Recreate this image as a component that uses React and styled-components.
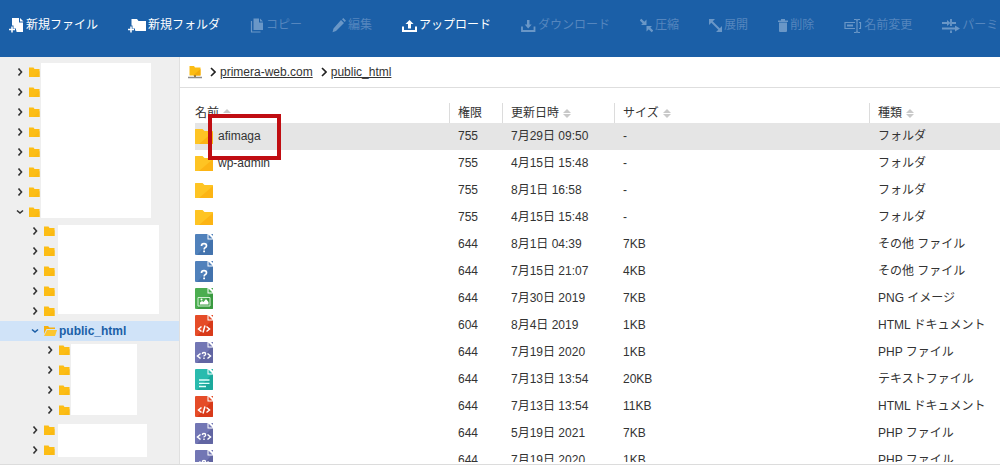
import React from "react";
import styled, { createGlobalStyle } from "styled-components";

const Global = createGlobalStyle`
  * { box-sizing: border-box; }
  body {
    margin: 0;
    background: #fff;
    color: #333;
    font: 12px/20px "Liberation Sans", "Noto Sans CJK JP", sans-serif;
  }
  button { font: inherit; color: inherit; background: none; border: 0; padding: 0; }
  svg { display: block; flex: none; }
`;

const Shell = styled.div`
  display: flex;
  flex-direction: column;
  height: 100vh;
  overflow: hidden;
`;

const Toolbar = styled.header`
  flex: none;
  display: flex;
  align-items: flex-start;
  gap: 30px;
  padding: 15px 0 22px 9px;
  background: #1b5fa7;
  overflow: hidden;
`;

const ToolButton = styled.button`
  flex: none;
  display: flex;
  align-items: center;
  gap: 2px;
  color: #fff;
  white-space: nowrap;
  cursor: pointer;
  &:disabled { color: #5586be; cursor: default; }
  &:disabled svg { color: #6a97c7; }
`;

const Body = styled.div`
  flex: 1;
  min-height: 0;
  display: flex;
  margin-bottom: 8px;
  border-bottom: 1px solid #dcdcdc;
`;

const Sidebar = styled.nav`
  flex: none;
  width: 180px;
  overflow: hidden;
  background: #efefef;
  border-right: 1px solid #e0e0e0;
`;

const Tree = styled.ul`
  position: relative;
  list-style: none;
  padding: 0;
  margin: ${(p) => (p.$root ? "-15px" : "-1px")} 0 0;
`;

const TreeRow = styled.div`
  display: flex;
  align-items: center;
  height: 20px;
  padding-left: ${(p) => 15 + p.$depth * 15}px;
  background: ${(p) => (p.$active ? "#d0e3f8" : "transparent")};
  color: ${(p) => (p.$active ? "#1b5fa7" : "#333")};
  font-weight: bold;
`;

const Toggle = styled.button`
  display: flex;
  justify-content: center;
  width: 10px;
  margin-right: 4px;
  cursor: pointer;
`;

const TreeIcon = styled.span`
  width: 15px;
  flex: none;
`;

const Mask = styled.div`
  position: absolute;
  background: #fff;
  left: ${(p) => p.$left}px;
  top: ${(p) => p.$top}px;
  width: ${(p) => p.$width}px;
  height: ${(p) => p.$height}px;
`;

const Main = styled.main`
  flex: 1;
  min-width: 0;
  display: flex;
  flex-direction: column;
`;

const Breadcrumb = styled.nav`
  flex: none;
  display: flex;
  align-items: center;
  gap: 8px;
  height: 31px;
  padding-left: 8px;
  border-bottom: 1px solid #dedede;
`;

const Crumb = styled.span`
  display: flex;
  align-items: center;
  gap: 4px;
`;

const CrumbLink = styled.a`
  color: #333;
  text-decoration: underline;
`;

const Listing = styled.section`
  flex: 1;
  min-height: 0;
  overflow: hidden;
  padding-left: 15px;
  padding-top: 15px;
  margin-bottom: 2px;
`;

const Files = styled.table`
  width: 100%;
  table-layout: fixed;
  border-collapse: separate;
  border-spacing: 0;
`;

const Col = styled.col`
  width: ${(p) => (p.$width ? `${p.$width}px` : "auto")};
`;

const Head = styled.th`
  height: 20px;
  padding: 0 0 0 8px;
  text-align: left;
  font-weight: normal;
  border-left: 1px solid #dcdcdc;
  &:first-child { padding-left: 0; border-left: 0; }
`;

const SortButton = styled.button`
  display: flex;
  align-items: center;
  gap: 4px;
  height: 20px;
  color: #333;
  cursor: pointer;
`;

const FileRow = styled.tr`
  background: ${(p) => (p.$active ? "#e5e5e5" : "transparent")};
`;

const Cell = styled.td`
  position: relative;
  height: 27px;
  padding: 0 0 1px 9px;
  white-space: nowrap;
  &:first-child { padding-left: 0; }
`;

const Name = styled.div`
  display: flex;
  align-items: center;
  gap: 5px;
`;

const Highlight = styled.div`
  position: absolute;
  z-index: 1;
  left: 13px;
  top: -9px;
  width: 73px;
  height: 46px;
  border: 4px solid #c00d12;
`;

const PlusMark = () => <path d="M3 9.500v6M0 12.500h6" stroke="currentColor" strokeWidth="1.500" />;

const toolIcons = {
  newFile: [15, <>
    <path d="M3 1h7v4.500h4V15H7.500v-1.500H7v-2H4.500V8.500H3z" fill="currentColor" />
    <path d="M11 1l3.500 3.500H11z" fill="currentColor" /><PlusMark /></>],
  newFolder: [18, <>
    <path d="M3.500 2H9l1.500 2H18v10H7.500v-.5H7v-2H4.500V8.500h-1z" fill="currentColor" />
    <PlusMark /></>],
  copy: [14, <>
    <path d="M3.500 1.500h5.500v4h4v7.500H3.500z" fill="currentColor" /><path d="M10 1.500l3 3h-3z" fill="currentColor" />
    <path d="M1.500 4v11H10.500" fill="none" stroke="currentColor" strokeWidth="1.200" /></>],
  edit: [14, <>
    <path d="M9 3l3 3-8 8-3.500 1.200L1.500 11.500zM10 2.200l1.300-1.200 2.700 2.700-1.300 1.300z" fill="currentColor" /></>],
  upload: [15, <>
    <path d="M1 9.500v4.500h13V9.500" fill="none" stroke="currentColor" strokeWidth="2" />
    <path d="M7.500 3l4 4H9v4.500H6V7H3.500z" fill="currentColor" /></>],
  download: [15, <>
    <path d="M1 9.500v4.500h12.500V9.500" fill="none" stroke="currentColor" strokeWidth="1.800" />
    <path d="M7.200 11.500l3.500-4H8.500V3H6v4.500H3.700z" fill="currentColor" /></>],
  compress: [13, <>
    <path d="M.5 2.500l4 4M8.500 10.500l4 4" stroke="currentColor" strokeWidth="2.400" />
    <path d="M6.500 2.500v5.500H1zM6.500 9H12l-5.500 5.500z" fill="currentColor" /></>],
  expand: [13, <>
    <path d="M2 4l9 9" stroke="currentColor" strokeWidth="2" />
    <path d="M0 2h6L0 8zM13 15V9l-6 6z" fill="currentColor" /></>],
  trash: [10, <>
    <path d="M0 3.500h3V2h4v1.500h3V5H0zM1 5.500h8V14q0 1-1 1H2q-1 0-1-1z" fill="currentColor" /></>],
  rename: [18, <>
    <path d="M11 5.500H1v6h10M15 5.500h1.500v6H15M10 2.500h2l1 1 1-1h2M13 3.500v11M10 15.500h2l1-1 1 1h2" fill="none" stroke="currentColor" strokeWidth="1.200" />
    <path d="M3 7.500h6v2H3z" fill="currentColor" /></>],
  permission: [18, <>
    <path d="M0 6h6M10 6h4M0 11.500h15M9 2v7M9 13.500V16" stroke="currentColor" strokeWidth="1.800" />
    <path d="M5 3l3.500 3L5 9zM13 8.500l5 3-5 3z" fill="currentColor" /></>],
};

function ToolIcon({ name }) {
  const [width, art] = toolIcons[name];
  return <svg width={width} height="16" viewBox={`0 0 ${width} 16`} aria-hidden="true">{art}</svg>;
}

const tools = [
  ["newFile", "新規ファイル", true],
  ["newFolder", "新規フォルダ", true],
  ["copy", "コピー"],
  ["edit", "編集"],
  ["upload", "アップロード", true],
  ["download", "ダウンロード"],
  ["compress", "圧縮"],
  ["expand", "展開"],
  ["trash", "削除"],
  ["rename", "名前変更"],
  ["permission", "パーミッション"],
];

function Chevron({ open }) {
  return open ? (
    <svg width="8" height="6" viewBox="0 0 8 6"><path d="M1 1.500l3 2.500 3-2.500" fill="none" stroke="currentColor" strokeWidth="1.600" /></svg>
  ) : (
    <svg width="6" height="8" viewBox="0 0 6 8"><path d="M1.500 .5L4.500 4 1.500 7.500" fill="none" stroke="currentColor" strokeWidth="1.600" /></svg>
  );
}

const SmallFolder = () => (
  <svg width="11" height="10" viewBox="0 0 11 10">
    <path d="M0 .5h4.500l1 1.500H10.500v8H0z" fill="#fcbd15" />
    <path d="M10.500 4v6H4z" fill="#fab912" />
  </svg>
);

const OpenFolder = () => (
  <svg width="13" height="10" viewBox="0 0 13 10">
    <path d="M0 0h4l1.500 1.500H11V3H2.500L0 8z" fill="#f5b011" />
    <path d="M3 4h10l-2 6H0z" fill="#fcc62f" />
  </svg>
);

function Node({ depth, open, active, label, children }) {
  return (
    <li>
      <TreeRow $depth={depth} $active={active}>
        <Toggle aria-label="フォルダを開閉" aria-expanded={!!open}><Chevron open={open} /></Toggle>
        <TreeIcon>{active ? <OpenFolder /> : <SmallFolder />}</TreeIcon>
        {label}
      </TreeRow>
      {children}
    </li>
  );
}

const closed = (count, depth) => Array.from({ length: count }, (_, i) => <Node key={i} depth={depth} />);

const Folder = () => (
  <svg width="18" height="16" viewBox="0 0 18 16">
    <path d="M0 1.500Q0 1 .5 1H7.500l2 2h8q.5 0 .5.5V16H.5Q0 16 0 15.500z" fill="#fec423" />
    <path d="M18 4v12H4z" fill="#fcb414" />
  </svg>
);

const fileArt = {
  unknown: ["#5081bb", "#4373ad", <>
    <path d="M6.500 12q0-2.300 2.500-2.300t2.500 2q0 1.200-1.200 1.900t-1.200 1.900" fill="none" stroke="#fff" strokeWidth="1.700" />
    <path d="M8.200 16.500h1.800v1.700H8.200z" fill="#fff" /></>],
  image: ["#4bad50", "#3a9a40", <>
    <path d="M3 9.500h12v8.500H3z" fill="none" stroke="#d5f0d6" />
    <path d="M5 16.500v-2l2-1.500 1.500 1L11 11l2.500 3v2.500z" fill="#fff" /><circle cx="6.500" cy="11.500" r="1" fill="#fff" /></>],
  html: ["#e54c28", "#d83a1a", <path d="M6.500 11.500l-3 2.500 3 2.500M11.500 11.500l3 2.500-3 2.500M10 10.500l-2 7" fill="none" stroke="#fff" strokeWidth="1.500" />],
  php: ["#7276b4", "#6165a2", <>
    <path d="M5.500 11.500l-3 2.500 3 2.500M12.500 11.500l3 2.500-3 2.500" fill="none" stroke="#fff" strokeWidth="1.500" />
    <path d="M7.300 12q0-1.500 1.700-1.500t1.700 1.400q0 .9-.9 1.400t-.8 1.200" fill="none" stroke="#fff" strokeWidth="1.300" />
    <path d="M8.300 15.500h1.400v1.500H8.300z" fill="#fff" /></>],
  text: ["#2abbae", "#1ba99c", <path d="M4 11h10.500M4 14.300h10.500M4 17.500h7" stroke="#e0fffb" strokeWidth="1.300" />],
};

function FileIcon({ kind }) {
  if (kind === "folder") return <Folder />;
  const [light, dark, mark] = fileArt[kind];
  return (
    <svg width="18" height="21" viewBox="0 0 18 21">
      <path d="M1 0h12l5 5v15q0 1-1 1H1q-1 0-1-1V1q0-1 1-1z" fill={light} />
      <path d="M18 5v15q0 1-1 1H2L16 6z" fill={dark} />
      <path d="M12.500 0H17q1 0 1 1v4.500h-5.500z" fill="#fff" />
      <path d="M13.500 .5l4 4h-4zM16 0h2v2z" fill={light} />
      {mark}
    </svg>
  );
}

const SortMark = () => (
  <svg width="8" height="9" viewBox="0 0 8 9" aria-hidden="true">
    <path d="M4 0l4 4H0zM4 9L0 5h8z" fill="#c9c9c9" />
  </svg>
);

const columns = [["名前", true, 254], ["権限", false, 53], ["更新日時", true, 112], ["サイズ", true, 255], ["種類", true]];

const files = [
  ["folder", "afimaga", "755", "7月29日 09:50", "-", "フォルダ"],
  ["folder", "wp-admin", "755", "4月15日 15:48", "-", "フォルダ"],
  ["folder", "", "755", "8月1日 16:58", "-", "フォルダ"],
  ["folder", "", "755", "4月15日 15:48", "-", "フォルダ"],
  ["unknown", "", "644", "8月1日 04:39", "7KB", "その他 ファイル"],
  ["unknown", "", "644", "7月15日 21:07", "4KB", "その他 ファイル"],
  ["image", "", "644", "7月30日 2019", "7KB", "PNG イメージ"],
  ["html", "", "604", "8月4日 2019", "1KB", "HTML ドキュメント"],
  ["php", "", "644", "7月19日 2020", "1KB", "PHP ファイル"],
  ["text", "", "644", "7月13日 13:54", "20KB", "テキストファイル"],
  ["html", "", "644", "7月13日 13:54", "11KB", "HTML ドキュメント"],
  ["php", "", "644", "5月19日 2021", "7KB", "PHP ファイル"],
  ["php", "", "644", "7月19日 2020", "1KB", "PHP ファイル"],
];

export default function App() {
  return (
    <Shell>
      <Global />
      <Toolbar>
        {tools.map(([icon, label, enabled]) => (
          <ToolButton key={icon} disabled={!enabled}><ToolIcon name={icon} />{label}</ToolButton>
        ))}
      </Toolbar>
      <Body>
        <Sidebar>
          <Tree $root>
            {closed(8, 0)}
            <Node depth={0} open>
              <Tree>
                {closed(5, 1)}
                <Node depth={1} open active label="public_html">
                  <Tree>
                    {closed(4, 2)}
                    <Mask $left={71} $top={4} $width={66} $height={71} />
                  </Tree>
                </Node>
                {closed(2, 1)}
                <Mask $left={58} $top={4} $width={101} $height={89} />
                <Mask $left={58} $top={203} $width={89} $height={33} />
              </Tree>
            </Node>
            <Mask $left={41} $top={21} $width={110} $height={155} />
          </Tree>
        </Sidebar>
        <Main>
          <Breadcrumb>
            <svg width="14" height="13" viewBox="0 0 14 13" aria-hidden="true">
              <path d="M1.500 0h4.500l1 1.500h5.500V9.500h-11z" fill="#fbbc14" />
              <path d="M12.500 3v6.500H5z" fill="#f3ab0b" />
              <path d="M0 11.500h14" stroke="#8b8b8b" strokeWidth="1.500" />
              <path d="M7 9v2" stroke="#a08040" strokeWidth="2" />
            </svg>
            {["primera-web.com", "public_html"].map((part) => (
              <Crumb key={part}>
                <svg width="6" height="10" viewBox="0 0 6 10"><path d="M1 1l4 4-4 4" fill="none" stroke="#222" strokeWidth="1.600" /></svg>
                <CrumbLink href="#">{part}</CrumbLink>
              </Crumb>
            ))}
          </Breadcrumb>
          <Listing>
            <Files>
              <colgroup>{columns.map(([label, , width]) => <Col key={label} $width={width} />)}</colgroup>
              <thead>
                <tr>
                  {columns.map(([label, sortable]) => (
                    <Head key={label} scope="col">
                      {sortable ? <SortButton>{label}<SortMark /></SortButton> : label}
                    </Head>
                  ))}
                </tr>
              </thead>
              <tbody>
                {files.map(([kind, name, ...rest], i) => (
                  <FileRow key={i} $active={i === 0}>
                    <Cell>
                      <Name><FileIcon kind={kind} />{name}</Name>
                      {i === 0 && <Highlight />}
                    </Cell>
                    {rest.map((value, j) => <Cell key={j}>{value}</Cell>)}
                  </FileRow>
                ))}
              </tbody>
            </Files>
          </Listing>
        </Main>
      </Body>
    </Shell>
  );
}
